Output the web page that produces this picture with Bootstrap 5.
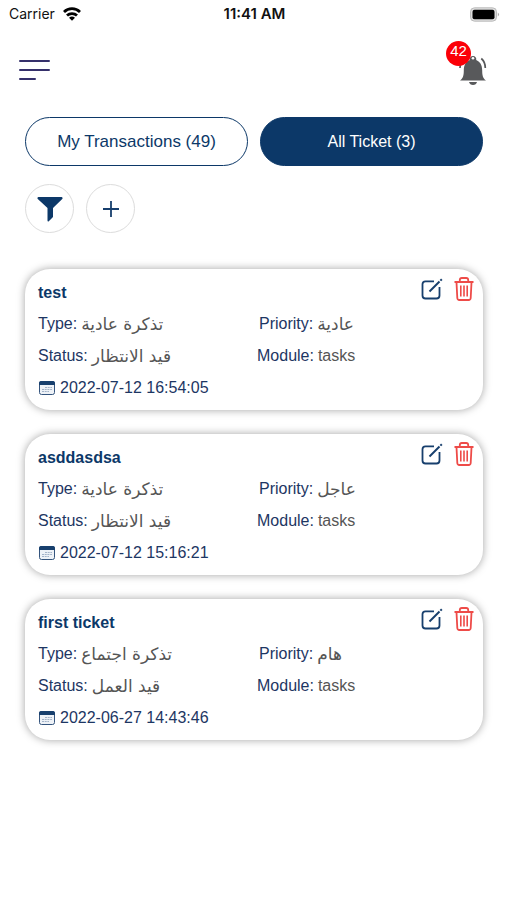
<!DOCTYPE html>
<html lang="en">
<head>
<meta charset="utf-8">
<meta name="viewport" content="width=device-width, initial-scale=1">
<title>Tickets</title>
<link href="https://cdn.jsdelivr.net/npm/bootstrap@5.3.0/dist/css/bootstrap.min.css" rel="stylesheet">
<style>
  :root { --navy: #0c3868; --ink: #1d3663; }
  body { font-family: "Liberation Sans", "DejaVu Sans", sans-serif; font-size: 16px; color: #555; background: #fff; }
  svg { display: block; }
  .status-bar { font-family: Inter, sans-serif; font-size: 14px; line-height: 28px; color: #111; padding: 0 7px 0 9px; }
  .status-bar .clock { font-size: 15px; font-weight: 600; }
  .top-bar { padding: 10px 18px 0 19px; height: 72px; }
  .plain { border: 0; background: none; padding: 0; }
  .bell { position: relative; padding: 16px 0 0; }
  .count { position: absolute; top: 3px; left: -12px; width: 25px; height: 25px; border-radius: 50%; background: #fb0007; color: #fff; font-size: 15px; line-height: 20px; text-align: center; }
  .content { padding: 17px 24px 24px 25px; }
  .tabs { gap: 12px; }
  .tab { flex: 1 1 0; height: 49px; border: 1px solid var(--navy); border-radius: 25px; background: #fff; color: var(--navy); font-size: 17px; padding: 0; }
  .tab.current { background: var(--navy); color: #fff; font-size: 16px; }
  .tools { gap: 12px; margin-top: 18px; margin-bottom: 36px; }
  .tool { width: 49px; height: 49px; border: 1px solid #dcdcdc; border-radius: 50%; background: #fff; padding: 0; }
  .tickets { gap: 24px; }
  .ticket { border: 0; border-radius: 25px; box-shadow: 0 0 9px rgba(0,0,0,.36); padding: 8px 9px 7px 13px; background: #fff; }
  .ticket h2 { font-size: 16px; line-height: 31px; font-weight: 700; color: var(--navy); margin: 0; }
  .ticket dl { display: grid; grid-template-columns: 1fr 1fr; margin: 0; line-height: 32px; }
  .ticket dl > div { display: flex; gap: 4px; height: 32px; }
  .ticket dl > div:nth-child(even) { padding-left: 1px; }
  .ticket dl > div:nth-child(2) { padding-left: 3px; }
  .ticket dt { font-weight: 400; color: var(--ink); }
  .ticket dd { margin: 0; color: #555; }
  .ticket dd[lang=ar] { font-family: "DejaVu Sans", sans-serif; font-size: 17px; }
  .ticket time { line-height: 31px; color: var(--ink); }
  .when { gap: 5px; padding-left: 1px; height: 31px; }
  .acts { gap: 11px; }
</style>
<script src="https://cdn.jsdelivr.net/npm/bootstrap@5.3.0/dist/js/bootstrap.bundle.min.js"></script>
</head>
<body>
<svg class="d-none" aria-hidden="true">
  <symbol id="edit" viewBox="0 0 22 22"><path d="M13 3.300H4.500a3 3 0 0 0-3 3V17.500a3 3 0 0 0 3 3H15.500a3 3 0 0 0 3-3V9" fill="none" stroke="#173f6d" stroke-width="1.800"/><path d="M8.500 13.500 18.500 3.500" stroke="#173f6d" stroke-width="2"/><path d="m19.400 2.600 1.400-1.400" stroke="#173f6d" stroke-width="2"/></symbol>
  <symbol id="trash" viewBox="0 0 20 24"><g fill="none" stroke="#ee4b48" stroke-width="1.800"><path d="M.500 5h19M5.800 5V3q0-2 2-2h4.400q2 0 2 2v2M2.500 5.500l.8 15.500q.2 2 2 2h9.400q1.800 0 2-2l.8-15.500"/><path d="M6.800 8.500v11M10 8.500v11M13.200 8.500v11" stroke-width="1.600"/></g></symbol>
  <symbol id="cal" viewBox="0 0 16 14"><rect x=".5" y=".5" width="15" height="13" rx="2" fill="#eef2f7" stroke="#34547d"/><path d="M0 4V2q0-2 2-2h12q2 0 2 2v2z" fill="#173f6d"/><path d="M6 6.500h7M3 8.500h10M3 10.500h7" stroke="#a3b3c8" stroke-dasharray="2 .7"/></symbol>
</svg>

<div class="status-bar d-flex justify-content-between align-items-center">
  <div class="col d-flex align-items-center gap-2"><span>Carrier</span>
    <svg width="18" height="14" viewBox="0 0 18 14" fill="none" stroke="#000" stroke-width="2.800" aria-hidden="true"><path d="M1 5a11.400 11.400 0 0 1 16 0M4 8.600a7.200 7.200 0 0 1 10 0"/><path d="m9 13.800-3-3q3-2.400 6 0z" fill="#000" stroke="none"/></svg>
  </div>
  <div class="clock">11:41 AM</div>
  <div class="col d-flex justify-content-end">
    <svg width="31" height="15" viewBox="0 0 31 15" aria-hidden="true"><rect x="1.500" y=".8" width="26" height="13.400" rx="4" fill="#ddd" stroke="#bbb"/><rect x="3.500" y="2.800" width="22" height="9.400" rx="2" fill="#000"/><path d="M28.800 5.500q2.500 2 0 4z" fill="#aaa"/></svg>
  </div>
</div>

<header class="top-bar d-flex justify-content-between align-items-start">
  <button class="plain mt-3 pt-1" aria-label="Menu"><svg width="31" height="24" viewBox="0 0 31 24" stroke="#35306b" stroke-width="2" stroke-linecap="round"><path d="M1 3h29M1 12h29M1 21h15"/></svg></button>
  <button class="plain bell" aria-label="Notifications">
    <svg width="31" height="32" viewBox="0 0 31 32"><path d="M2 26.500c3-2 3.800-5 3.800-10 0-6 2.500-9 6-10.500a3.300 3.300 0 1 1 6.400 0c3.500 1.500 6 4.500 6 10.500 0 5 .8 8 3.800 10z" fill="#58595b"/><circle cx="15" cy="4.200" r="1.300" fill="#fff"/><path d="M11 28h8q-.8 3-4 3t-4-3z" fill="#58595b"/><path d="M23.300 4.500q4 3.500 4 9.500M5.500 4.500q-3.500 4-3.500 9.500" fill="none" stroke="#58595b" stroke-width="1.700"/></svg>
    <span class="count">42</span>
  </button>
</header>

<main class="content">
  <div class="tabs d-flex">
    <button class="tab">My Transactions (49)</button>
    <button class="tab current">All Ticket (3)</button>
  </div>
  <div class="tools d-flex">
    <button class="tool d-flex align-items-center justify-content-center" aria-label="Filter"><svg width="26" height="26" viewBox="0 0 26 26"><path d="M.5 2q0-1 1-1h23q1 0 1 1v.7L16 12v9l-4.500 4.500q-1 .3-1-1V12L.5 2.700z" fill="#0c3868"/></svg></button>
    <button class="tool d-flex align-items-center justify-content-center" aria-label="Add"><svg width="18" height="18" viewBox="0 0 18 18"><path d="M9 1v16M1 9h16" stroke="#173f6d" stroke-width="1.800"/></svg></button>
  </div>

  <section class="tickets d-flex flex-column">
    <article class="ticket card">
      <div class="d-flex justify-content-between align-items-start">
        <h2>test</h2>
        <div class="acts d-flex"><button class="plain" aria-label="Edit"><svg width="22" height="22"><use href="#edit"/></svg></button><button class="plain" aria-label="Delete"><svg width="20" height="24"><use href="#trash"/></svg></button></div>
      </div>
      <dl>
        <div><dt>Type:</dt><dd lang="ar">تذكرة عادية</dd></div>
        <div><dt>Priority:</dt><dd lang="ar">عادية</dd></div>
        <div><dt>Status:</dt><dd lang="ar">قيد الانتظار</dd></div>
        <div><dt>Module:</dt><dd>tasks</dd></div>
      </dl>
      <div class="when d-flex align-items-center"><svg width="16" height="14" aria-hidden="true"><use href="#cal"/></svg><time>2022-07-12 16:54:05</time></div>
    </article>
    <article class="ticket card">
      <div class="d-flex justify-content-between align-items-start">
        <h2>asddasdsa</h2>
        <div class="acts d-flex"><button class="plain" aria-label="Edit"><svg width="22" height="22"><use href="#edit"/></svg></button><button class="plain" aria-label="Delete"><svg width="20" height="24"><use href="#trash"/></svg></button></div>
      </div>
      <dl>
        <div><dt>Type:</dt><dd lang="ar">تذكرة عادية</dd></div>
        <div><dt>Priority:</dt><dd lang="ar">عاجل</dd></div>
        <div><dt>Status:</dt><dd lang="ar">قيد الانتظار</dd></div>
        <div><dt>Module:</dt><dd>tasks</dd></div>
      </dl>
      <div class="when d-flex align-items-center"><svg width="16" height="14" aria-hidden="true"><use href="#cal"/></svg><time>2022-07-12 15:16:21</time></div>
    </article>
    <article class="ticket card">
      <div class="d-flex justify-content-between align-items-start">
        <h2>first ticket</h2>
        <div class="acts d-flex"><button class="plain" aria-label="Edit"><svg width="22" height="22"><use href="#edit"/></svg></button><button class="plain" aria-label="Delete"><svg width="20" height="24"><use href="#trash"/></svg></button></div>
      </div>
      <dl>
        <div><dt>Type:</dt><dd lang="ar">تذكرة اجتماع</dd></div>
        <div><dt>Priority:</dt><dd lang="ar">هام</dd></div>
        <div><dt>Status:</dt><dd lang="ar">قيد العمل</dd></div>
        <div><dt>Module:</dt><dd>tasks</dd></div>
      </dl>
      <div class="when d-flex align-items-center"><svg width="16" height="14" aria-hidden="true"><use href="#cal"/></svg><time>2022-06-27 14:43:46</time></div>
    </article>
  </section>
</main>
</body>
</html>
